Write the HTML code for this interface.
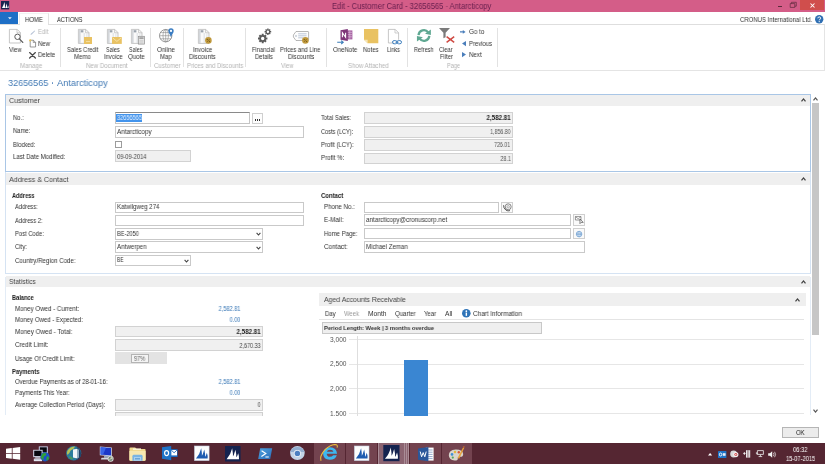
<!DOCTYPE html>
<html><head><meta charset="utf-8"><title>Edit - Customer Card - 32656565 - Antarcticopy</title>
<style>
html,body{margin:0;padding:0;}
body{width:825px;height:464px;overflow:hidden;background:#fff;position:relative;font-family:"Liberation Sans",sans-serif;}
.b{position:absolute;box-sizing:border-box;}
.t{will-change:transform;position:absolute;white-space:nowrap;line-height:1;display:block;}
svg{overflow:visible;}
#w{position:absolute;left:0;top:0;width:825px;height:464px;overflow:hidden;}
</style></head><body><div id="w">
<div class="b" style="left:0.00px;top:0.00px;width:825.00px;height:12.20px;background:#d45d88;"></div>
<div class="b" style="left:800.30px;top:0.00px;width:23.90px;height:9.80px;background:#d04e4c;"></div>
<span class="t" style="top:2px;font-size:8.4px;color:#6a2150;left:331.90px;transform-origin:0 50%;transform:scaleX(0.9025);">Edit - Customer Card - 32656565 · Antarcticopy</span>
<div class="b" style="left:0.00px;top:12.00px;width:18.00px;height:12.20px;background:#1e6fc6;"></div>
<div class="b" style="left:19.30px;top:13.00px;width:29.60px;height:12.00px;background:#fff;border:1px solid #e2e2e2;border-bottom:none;border-top-color:#f2f2f2;border-left-color:#ededed;"></div>
<div class="b" style="left:0.00px;top:24.20px;width:825.00px;height:46.80px;background:#fff;border:1px solid #e4e4e4;border-left:none;border-top-color:#dedede;"></div>
<div class="b" style="left:20.30px;top:23.80px;width:27.50px;height:1.70px;background:#fff;"></div>
<span class="t" style="top:17px;font-size:6.9px;color:#2a2a2a;left:25.20px;transform-origin:0 50%;transform:scaleX(0.8695);">HOME</span>
<span class="t" style="top:17px;font-size:6.9px;color:#2a2a2a;left:56.60px;transform-origin:0 50%;transform:scaleX(0.8282);">ACTIONS</span>
<span class="t" style="top:17px;font-size:6.9px;color:#333;left:739.70px;transform-origin:0 50%;transform:scaleX(0.8688);">CRONUS International Ltd.</span>
<span class="t" style="top:78px;font-size:9.4px;color:#4179b4;left:8.00px;transform-origin:0 50%;transform:scaleX(0.9659);">32656565</span>
<div class="b" style="left:51.70px;top:82.30px;width:1.40px;height:1.40px;background:#5a8abf;border-radius:0.7px;"></div>
<span class="t" style="top:78px;font-size:9.4px;color:#4179b4;left:56.70px;transform-origin:0 50%;transform:scaleX(0.9841);">Antarcticopy</span>
<div class="b" style="left:5.00px;top:94.00px;width:806.20px;height:78.00px;background:#fff;border:1px solid #a9c6e6;"></div>
<div class="b" style="left:6.00px;top:95.00px;width:804.20px;height:11.30px;background:#efefef;"></div>
<span class="t" style="top:97px;font-size:7.9px;color:#444;left:8.70px;transform-origin:0 50%;transform:scaleX(0.9082);">Customer</span>
<div class="b" style="left:5.00px;top:172.00px;width:806.20px;height:102.30px;border:1px solid #d5e3f3;border-top:none;"></div>
<div class="b" style="left:6.00px;top:172.60px;width:804.20px;height:12.00px;background:#efefef;"></div>
<span class="t" style="top:176px;font-size:7.9px;color:#444;left:8.70px;transform-origin:0 50%;transform:scaleX(0.9049);">Address &amp; Contact</span>
<div class="b" style="left:5.00px;top:276.60px;width:806.20px;height:138.90px;border:1px solid #e3ecf6;border-bottom:none;border-top:none;"></div>
<div class="b" style="left:6.00px;top:276.20px;width:804.20px;height:10.80px;background:#efefef;"></div>
<span class="t" style="top:278px;font-size:7.9px;color:#444;left:8.70px;transform-origin:0 50%;transform:scaleX(0.8510);">Statistics</span>
<svg class="b" style="left:801.20px;top:98.30px" width="5" height="4" viewBox="0 0 5 4"><path d="M0.5 3.3 L2.5 0.9 L4.5 3.3" fill="none" stroke="#444" stroke-width="1.3"/></svg>
<svg class="b" style="left:801.20px;top:176.60px" width="5" height="4" viewBox="0 0 5 4"><path d="M0.5 3.3 L2.5 0.9 L4.5 3.3" fill="none" stroke="#444" stroke-width="1.3"/></svg>
<svg class="b" style="left:801.20px;top:279.60px" width="5" height="4" viewBox="0 0 5 4"><path d="M0.5 3.3 L2.5 0.9 L4.5 3.3" fill="none" stroke="#444" stroke-width="1.3"/></svg>
<span class="t" style="top:115px;font-size:6.7px;color:#303030;left:12.60px;transform-origin:0 50%;transform:scaleX(0.8708);">No.:</span>
<span class="t" style="top:128px;font-size:6.7px;color:#303030;left:12.60px;transform-origin:0 50%;transform:scaleX(0.8817);">Name:</span>
<span class="t" style="top:142px;font-size:6.7px;color:#303030;left:12.60px;transform-origin:0 50%;transform:scaleX(0.8717);">Blocked:</span>
<span class="t" style="top:154px;font-size:6.7px;color:#303030;left:12.60px;transform-origin:0 50%;transform:scaleX(0.9077);">Last Date Modified:</span>
<div class="b" style="left:115.00px;top:112.20px;width:134.50px;height:11.80px;background:#fff;border:1px solid #c4c4c4;border-top-color:#8a8a8a;"></div>
<div class="b" style="left:116.00px;top:113.80px;width:26.20px;height:7.80px;background:#4394ec;"></div>
<span class="t" style="top:115px;font-size:6.4px;color:#e8f2ff;left:116.60px;transform-origin:0 50%;transform:scaleX(0.8779);">32656565</span>
<div class="b" style="left:251.50px;top:113.30px;width:11.30px;height:10.30px;background:#fdfdfd;border:1px solid #cfcfcf;"></div>
<div class="b" style="left:255.10px;top:119.20px;width:1.20px;height:1.40px;background:#333;"></div>
<div class="b" style="left:257.10px;top:119.20px;width:1.20px;height:1.40px;background:#333;"></div>
<div class="b" style="left:259.10px;top:119.20px;width:1.20px;height:1.40px;background:#333;"></div>
<div class="b" style="left:115.00px;top:126.20px;width:188.60px;height:11.40px;background:#fff;border:1px solid #c9c9c9;"></div>
<span class="t" style="top:129px;font-size:6.5px;color:#333;left:116.80px;transform-origin:0 50%;transform:scaleX(0.9674);">Antarcticopy</span>
<div class="b" style="left:115.30px;top:141.20px;width:6.60px;height:6.60px;background:#fff;border:1px solid #9c9c9c;"></div>
<div class="b" style="left:115.00px;top:150.20px;width:75.70px;height:12.20px;background:#f0f0f0;border:1px solid #d2d2d2;"></div>
<span class="t" style="top:154px;font-size:6.3px;color:#444;left:116.80px;transform-origin:0 50%;transform:scaleX(0.9123);">09-09-2014</span>
<span class="t" style="top:115px;font-size:6.7px;color:#303030;left:321.30px;transform-origin:0 50%;transform:scaleX(0.8690);">Total Sales:</span>
<span class="t" style="top:129px;font-size:6.7px;color:#303030;left:321.30px;transform-origin:0 50%;transform:scaleX(0.8397);">Costs (LCY):</span>
<span class="t" style="top:142px;font-size:6.7px;color:#303030;left:321.30px;transform-origin:0 50%;transform:scaleX(0.8818);">Profit (LCY):</span>
<span class="t" style="top:155px;font-size:6.7px;color:#303030;left:321.30px;transform-origin:0 50%;transform:scaleX(0.9163);">Profit %:</span>
<div class="b" style="left:364.30px;top:112.20px;width:148.50px;height:11.80px;background:#f0f0f0;border:1px solid #d2d2d2;"></div>
<div class="b" style="left:364.30px;top:126.20px;width:148.50px;height:11.40px;background:#f0f0f0;border:1px solid #d2d2d2;"></div>
<div class="b" style="left:364.30px;top:139.40px;width:148.50px;height:11.40px;background:#f0f0f0;border:1px solid #d2d2d2;"></div>
<div class="b" style="left:364.30px;top:152.60px;width:148.50px;height:11.70px;background:#f0f0f0;border:1px solid #d2d2d2;"></div>
<span class="t" style="top:115px;font-size:6.6px;color:#222;font-weight:bold;right:314.60px;transform-origin:100% 50%;transform:scaleX(0.9419);">2,582.81</span>
<span class="t" style="top:129px;font-size:6.6px;color:#555;right:314.40px;transform-origin:100% 50%;transform:scaleX(0.8018);">1,856.80</span>
<span class="t" style="top:142px;font-size:6.6px;color:#555;right:314.60px;transform-origin:100% 50%;transform:scaleX(0.7975);">726.01</span>
<span class="t" style="top:156px;font-size:6.6px;color:#555;right:314.60px;transform-origin:100% 50%;transform:scaleX(0.8096);">28.1</span>
<span class="t" style="top:193px;font-size:6.6px;color:#222;font-weight:bold;left:12.00px;transform-origin:0 50%;transform:scaleX(0.8519);">Address</span>
<span class="t" style="top:204px;font-size:6.7px;color:#303030;left:15.10px;transform-origin:0 50%;transform:scaleX(0.8585);">Address:</span>
<span class="t" style="top:218px;font-size:6.7px;color:#303030;left:15.10px;transform-origin:0 50%;transform:scaleX(0.8586);">Address 2:</span>
<span class="t" style="top:231px;font-size:6.7px;color:#303030;left:15.10px;transform-origin:0 50%;transform:scaleX(0.8719);">Post Code:</span>
<span class="t" style="top:244px;font-size:6.7px;color:#303030;left:15.10px;transform-origin:0 50%;transform:scaleX(0.8881);">City:</span>
<span class="t" style="top:258px;font-size:6.7px;color:#303030;left:15.10px;transform-origin:0 50%;transform:scaleX(0.9156);">Country/Region Code:</span>
<div class="b" style="left:115.00px;top:201.50px;width:188.60px;height:11.20px;background:#fff;border:1px solid #c9c9c9;"></div>
<span class="t" style="top:204px;font-size:6.4px;color:#333;left:116.80px;transform-origin:0 50%;transform:scaleX(0.9458);">Katwilgweg 274</span>
<div class="b" style="left:115.00px;top:214.80px;width:188.60px;height:11.40px;background:#fff;border:1px solid #c9c9c9;"></div>
<div class="b" style="left:115.00px;top:228.00px;width:147.70px;height:11.70px;background:#fff;border:1px solid #c9c9c9;"></div>
<span class="t" style="top:231px;font-size:6.3px;color:#333;left:116.80px;transform-origin:0 50%;transform:scaleX(0.8891);">BE-2050</span>
<svg class="b" style="left:256.20px;top:232.30px" width="5" height="4" viewBox="0 0 5 4"><path d="M0.6 0.8 L2.5 3 L4.4 0.8" fill="none" stroke="#444" stroke-width="1.1"/></svg>
<div class="b" style="left:115.00px;top:241.40px;width:147.70px;height:11.40px;background:#fff;border:1px solid #c9c9c9;"></div>
<span class="t" style="top:244px;font-size:6.3px;color:#333;left:116.80px;transform-origin:0 50%;transform:scaleX(0.9827);">Antwerpen</span>
<svg class="b" style="left:256.20px;top:245.60px" width="5" height="4" viewBox="0 0 5 4"><path d="M0.6 0.8 L2.5 3 L4.4 0.8" fill="none" stroke="#444" stroke-width="1.1"/></svg>
<div class="b" style="left:115.00px;top:254.50px;width:75.70px;height:11.90px;background:#fff;border:1px solid #c9c9c9;"></div>
<span class="t" style="top:257px;font-size:6.3px;color:#333;left:116.80px;transform-origin:0 50%;transform:scaleX(0.7853);">BE</span>
<svg class="b" style="left:184.00px;top:258.80px" width="5" height="4" viewBox="0 0 5 4"><path d="M0.6 0.8 L2.5 3 L4.4 0.8" fill="none" stroke="#444" stroke-width="1.1"/></svg>
<span class="t" style="top:193px;font-size:6.6px;color:#222;font-weight:bold;left:320.70px;transform-origin:0 50%;transform:scaleX(0.9077);">Contact</span>
<span class="t" style="top:204px;font-size:6.7px;color:#303030;left:323.60px;transform-origin:0 50%;transform:scaleX(0.9217);">Phone No.:</span>
<span class="t" style="top:217px;font-size:6.7px;color:#303030;left:323.60px;transform-origin:0 50%;transform:scaleX(0.9306);">E-Mail:</span>
<span class="t" style="top:231px;font-size:6.7px;color:#303030;left:323.60px;transform-origin:0 50%;transform:scaleX(0.8968);">Home Page:</span>
<span class="t" style="top:244px;font-size:6.7px;color:#303030;left:323.60px;transform-origin:0 50%;transform:scaleX(0.9458);">Contact:</span>
<div class="b" style="left:364.30px;top:201.50px;width:134.70px;height:11.00px;background:#fff;border:1px solid #c9c9c9;"></div>
<div class="b" style="left:501.00px;top:201.50px;width:11.80px;height:11.00px;background:#fafafa;border:1px solid #cfcfcf;"></div>
<div class="b" style="left:364.30px;top:214.40px;width:206.70px;height:11.40px;background:#fff;border:1px solid #c9c9c9;"></div>
<span class="t" style="top:217px;font-size:6.4px;color:#333;left:366.20px;transform-origin:0 50%;transform:scaleX(0.9743);">antarcticopy@cronuscorp.net</span>
<div class="b" style="left:573.40px;top:214.40px;width:11.50px;height:11.40px;background:#fafafa;border:1px solid #cfcfcf;"></div>
<div class="b" style="left:364.30px;top:227.80px;width:206.70px;height:11.40px;background:#fff;border:1px solid #c9c9c9;"></div>
<div class="b" style="left:573.40px;top:227.80px;width:11.50px;height:11.40px;background:#fafafa;border:1px solid #cfcfcf;"></div>
<div class="b" style="left:364.30px;top:241.30px;width:220.60px;height:11.40px;background:#fff;border:1px solid #c9c9c9;"></div>
<span class="t" style="top:244px;font-size:6.4px;color:#333;left:366.20px;transform-origin:0 50%;transform:scaleX(0.9554);">Michael Zeman</span>
<span class="t" style="top:295px;font-size:6.6px;color:#222;font-weight:bold;left:12.00px;transform-origin:0 50%;transform:scaleX(0.8612);">Balance</span>
<span class="t" style="top:306px;font-size:6.7px;color:#303030;left:14.90px;transform-origin:0 50%;transform:scaleX(0.9249);">Money Owed - Current:</span>
<span class="t" style="top:317px;font-size:6.7px;color:#303030;left:14.90px;transform-origin:0 50%;transform:scaleX(0.9039);">Money Owed - Expected:</span>
<span class="t" style="top:329px;font-size:6.7px;color:#303030;left:14.90px;transform-origin:0 50%;transform:scaleX(0.9377);">Money Owed - Total:</span>
<span class="t" style="top:342px;font-size:6.7px;color:#303030;left:14.90px;transform-origin:0 50%;transform:scaleX(0.9401);">Credit Limit:</span>
<span class="t" style="top:356px;font-size:6.7px;color:#303030;left:14.90px;transform-origin:0 50%;transform:scaleX(0.9058);">Usage Of Credit Limit:</span>
<span class="t" style="top:369px;font-size:6.6px;color:#222;font-weight:bold;left:12.00px;transform-origin:0 50%;transform:scaleX(0.8819);">Payments</span>
<span class="t" style="top:379px;font-size:6.7px;color:#303030;left:14.90px;transform-origin:0 50%;transform:scaleX(0.8889);">Overdue Payments as of 28-01-16:</span>
<span class="t" style="top:390px;font-size:6.7px;color:#303030;left:14.90px;transform-origin:0 50%;transform:scaleX(0.8903);">Payments This Year:</span>
<span class="t" style="top:402px;font-size:6.7px;color:#303030;left:14.90px;transform-origin:0 50%;transform:scaleX(0.8988);">Average Collection Period (Days):</span>
<span class="t" style="top:306px;font-size:6.3px;color:#3b79b7;right:584.60px;transform-origin:100% 50%;transform:scaleX(0.8930);">2,582.81</span>
<span class="t" style="top:317px;font-size:6.3px;color:#3b79b7;right:584.60px;transform-origin:100% 50%;transform:scaleX(0.8645);">0.00</span>
<span class="t" style="top:379px;font-size:6.3px;color:#3b79b7;right:584.60px;transform-origin:100% 50%;transform:scaleX(0.8930);">2,582.81</span>
<span class="t" style="top:390px;font-size:6.3px;color:#3b79b7;right:584.60px;transform-origin:100% 50%;transform:scaleX(0.8645);">0.00</span>
<div class="b" style="left:115.00px;top:326.00px;width:147.70px;height:11.40px;background:#f0f0f0;border:1px solid #d2d2d2;"></div>
<span class="t" style="top:329px;font-size:6.6px;color:#222;font-weight:bold;right:564.20px;transform-origin:100% 50%;transform:scaleX(0.9419);">2,582.81</span>
<div class="b" style="left:115.00px;top:339.40px;width:147.70px;height:11.40px;background:#f0f0f0;border:1px solid #d2d2d2;"></div>
<span class="t" style="top:343px;font-size:6.6px;color:#444;right:564.20px;transform-origin:100% 50%;transform:scaleX(0.8252);">2,670.33</span>
<div class="b" style="left:115.00px;top:352.20px;width:51.60px;height:12.10px;background:#e3e3e3;"></div>
<div class="b" style="left:130.60px;top:353.80px;width:18.80px;height:8.80px;background:#f4f4f4;border:1px solid #b4b4b4;"></div>
<span class="t" style="top:356px;font-size:6.4px;color:#666;left:134.20px;transform-origin:0 50%;transform:scaleX(0.8744);">97%</span>
<div class="b" style="left:115.00px;top:399.00px;width:147.70px;height:11.50px;background:#f0f0f0;border:1px solid #d2d2d2;"></div>
<span class="t" style="top:402px;font-size:6.3px;color:#444;right:564.20px;transform-origin:100% 50%;transform:scaleX(0.7991);">0</span>
<div class="b" style="left:115.00px;top:412.40px;width:147.70px;height:3.60px;background:#f0f0f0;border:1px solid #cfcfcf;border-bottom:none;"></div>
<div class="b" style="left:318.80px;top:293.00px;width:487.40px;height:12.80px;background:#efefef;"></div>
<span class="t" style="top:296px;font-size:7.3px;color:#444;left:323.60px;transform-origin:0 50%;transform:scaleX(0.9430);">Aged Accounts Receivable</span>
<svg class="b" style="left:795.40px;top:297.60px" width="5" height="4" viewBox="0 0 5 4"><path d="M0.5 3.3 L2.5 0.9 L4.5 3.3" fill="none" stroke="#444" stroke-width="1.3"/></svg>
<span class="t" style="top:311px;font-size:6.6px;color:#333;left:324.70px;transform-origin:0 50%;transform:scaleX(0.9031);">Day</span>
<span class="t" style="top:311px;font-size:6.6px;color:#999;left:344.00px;transform-origin:0 50%;transform:scaleX(0.8954);">Week</span>
<span class="t" style="top:311px;font-size:6.6px;color:#333;left:367.60px;transform-origin:0 50%;transform:scaleX(1.0140);">Month</span>
<span class="t" style="top:311px;font-size:6.6px;color:#333;left:395.00px;transform-origin:0 50%;transform:scaleX(0.9206);">Quarter</span>
<span class="t" style="top:311px;font-size:6.6px;color:#333;left:424.40px;transform-origin:0 50%;transform:scaleX(0.8998);">Year</span>
<span class="t" style="top:311px;font-size:6.6px;color:#333;left:444.70px;transform-origin:0 50%;transform:scaleX(0.9952);">All</span>
<svg class="b" style="left:461.80px;top:309.10px" width="8.6" height="8.6" viewBox="0 0 16 16"><circle cx="8" cy="8" r="8" fill="#2f74b8"/><rect x="6.8" y="6.6" width="2.6" height="6.2" fill="#fff"/><circle cx="8.1" cy="4" r="1.6" fill="#fff"/></svg>
<span class="t" style="top:311px;font-size:6.6px;color:#333;left:472.70px;transform-origin:0 50%;transform:scaleX(0.9629);">Chart Information</span>
<div class="b" style="left:318.80px;top:318.60px;width:484.80px;height:0.80px;background:#e4e4e4;"></div>
<div class="b" style="left:321.80px;top:322.30px;width:220.10px;height:11.50px;background:#efefef;border:1px solid #c8c8c8;"></div>
<span class="t" style="top:325px;font-size:6.2px;color:#333;font-weight:bold;left:323.60px;transform-origin:0 50%;transform:scaleX(0.9173);">Period Length: Week | 3 months overdue</span>
<div class="b" style="left:348.50px;top:338.80px;width:455.10px;height:0.80px;background:#e6e6e6;"></div>
<span class="t" style="top:337px;font-size:6.6px;color:#555;left:329.80px;transform-origin:0 50%;transform:scaleX(0.9929);">3,000</span>
<div class="b" style="left:348.50px;top:363.60px;width:455.10px;height:0.80px;background:#e6e6e6;"></div>
<span class="t" style="top:361px;font-size:6.6px;color:#555;left:329.80px;transform-origin:0 50%;transform:scaleX(0.9929);">2,500</span>
<div class="b" style="left:348.50px;top:388.20px;width:455.10px;height:0.80px;background:#e6e6e6;"></div>
<span class="t" style="top:386px;font-size:6.6px;color:#555;left:329.80px;transform-origin:0 50%;transform:scaleX(0.9929);">2,000</span>
<div class="b" style="left:348.50px;top:412.80px;width:455.10px;height:0.80px;background:#e6e6e6;"></div>
<span class="t" style="top:411px;font-size:6.6px;color:#555;left:329.80px;transform-origin:0 50%;transform:scaleX(0.9929);">1,500</span>
<div class="b" style="left:356.70px;top:336.00px;width:0.80px;height:79.60px;background:#dedede;"></div>
<div class="b" style="left:404.40px;top:359.80px;width:23.70px;height:55.80px;background:#3a86d2;"></div>
<div class="b" style="left:0.00px;top:415.60px;width:825.00px;height:27.60px;background:#fff;"></div>
<div class="b" style="left:782.30px;top:426.60px;width:37.10px;height:11.20px;background:#ececec;border:1px solid #b5b5b5;"></div>
<span class="t" style="top:430px;font-size:6.8px;color:#222;left:796.20px;transform-origin:0 50%;transform:scaleX(0.8753);">OK</span>
<div class="b" style="left:812.20px;top:102.80px;width:7.00px;height:232.40px;background:#c6c6c6;"></div>
<svg class="b" style="left:813.20px;top:96.80px" width="5" height="4" viewBox="0 0 5 4"><path d="M0.5 3.3 L2.5 0.9 L4.5 3.3" fill="none" stroke="#555" stroke-width="1.2"/></svg>
<svg class="b" style="left:813.20px;top:408.80px" width="5" height="4" viewBox="0 0 5 4"><path d="M0.5 0.7 L2.5 3.1 L4.5 0.7" fill="none" stroke="#555" stroke-width="1.2"/></svg>
<div class="b" style="left:0.00px;top:443.20px;width:825.00px;height:20.80px;background:#552632;"></div>
<div class="b" style="left:60.20px;top:28.00px;width:0.80px;height:38.80px;background:#e2e2e2;"></div>
<div class="b" style="left:150.00px;top:28.00px;width:0.80px;height:38.80px;background:#e2e2e2;"></div>
<div class="b" style="left:183.10px;top:28.00px;width:0.80px;height:38.80px;background:#e2e2e2;"></div>
<div class="b" style="left:245.10px;top:28.00px;width:0.80px;height:38.80px;background:#e2e2e2;"></div>
<div class="b" style="left:326.10px;top:28.00px;width:0.80px;height:38.80px;background:#e2e2e2;"></div>
<div class="b" style="left:407.00px;top:28.00px;width:0.80px;height:38.80px;background:#e2e2e2;"></div>
<div class="b" style="left:496.80px;top:28.00px;width:0.80px;height:38.80px;background:#e2e2e2;"></div>
<svg class="b" style="left:7.60px;top:17.40px" width="3.8" height="2.5" viewBox="0 0 44 26"><path d="M0 0 H44 L22 26 Z" fill="#eaf3fd"/></svg>
<svg class="b" style="left:815.20px;top:15.00px" width="8.4" height="8.4" viewBox="0 0 16 16"><circle cx="8" cy="8" r="8" fill="#2f6fb3"/><path d="M5.4 6.2 C5.4 2.9 10.8 2.9 10.8 6 C10.8 8 8.1 8 8.1 10.2" fill="none" stroke="#fff" stroke-width="1.9"/><circle cx="8.1" cy="12.6" r="1.2" fill="#fff"/></svg>
<div class="b" style="left:778.20px;top:5.90px;width:4.00px;height:1.20px;background:#5b2a3c;"></div>
<svg class="b" style="left:789.80px;top:2.20px" width="6.6" height="5.6" viewBox="0 0 66 56"><path d="M2 16 H48 V54 H2 Z M14 16 V3 H63 V42 H48" fill="none" stroke="#5b2a3c" stroke-width="7"/></svg>
<svg class="b" style="left:809.60px;top:2.60px" width="5" height="5" viewBox="0 0 10 10"><path d="M1 1 L9 9 M9 1 L1 9" stroke="#fff" stroke-width="2.1"/></svg>
<svg class="b" style="left:0.90px;top:1.40px" width="8.2" height="8.4" viewBox="0 0 82 84"><rect width="82" height="84" fill="#1b2550"/><path d="M10 70 Q26 44 34 10 Q42 40 40 70 Z M42 70 Q52 48 56 24 Q64 48 62 70 Z M64 70 Q70 56 72 42 Q77 56 76 70 Z" fill="#fff"/></svg>
<svg class="b" style="left:9.40px;top:28.80px" width="14.4" height="14.4" viewBox="0 0 144 144"><path d="M4 4 H82 L114 36 V140 H4 Z" fill="#fff" stroke="#b9b9b9" stroke-width="8"/><path d="M80 4 V38 H114" fill="none" stroke="#b9b9b9" stroke-width="7"/><circle cx="85" cy="78" r="27" fill="#fff" stroke="#5a5a5a" stroke-width="10"/><path d="M104 99 L138 134" stroke="#5a5a5a" stroke-width="13" stroke-linecap="round"/></svg>
<span class="t" style="top:47px;font-size:6.7px;color:#333;left:9.20px;transform-origin:0 50%;transform:scaleX(0.8749);">View</span>
<svg class="b" style="left:29.60px;top:29.60px" width="5.6" height="5.4" viewBox="0 0 56 54"><path d="M4 50 L10 36 L46 4 L52 10 L18 44 Z" fill="#b7c3d6"/></svg>
<span class="t" style="top:29px;font-size:6.7px;color:#b5b5b5;left:37.80px;transform-origin:0 50%;transform:scaleX(0.8835);">Edit</span>
<svg class="b" style="left:29.00px;top:38.60px" width="7.2" height="8.4" viewBox="0 0 72 84"><path d="M12 12 H44 L66 34 V80 H12 Z" fill="#fff" stroke="#6a6a6a" stroke-width="7"/><path d="M43 12 V35 H66" fill="none" stroke="#6a6a6a" stroke-width="6"/><circle cx="12" cy="14" r="11" fill="#e8c455"/></svg>
<span class="t" style="top:41px;font-size:6.7px;color:#333;left:38.00px;transform-origin:0 50%;transform:scaleX(0.8953);">New</span>
<svg class="b" style="left:28.90px;top:51.60px" width="7" height="6.6" viewBox="0 0 70 66"><path d="M6 6 L64 60 M64 6 L6 60" stroke="#4a4a4a" stroke-width="13" stroke-linecap="round"/></svg>
<span class="t" style="top:52px;font-size:6.7px;color:#333;left:38.00px;transform-origin:0 50%;transform:scaleX(0.8932);">Delete</span>
<span class="t" style="top:63px;font-size:6.7px;color:#b4b4b4;left:19.90px;transform-origin:0 50%;transform:scaleX(0.9210);">Manage</span>
<svg class="b" style="left:77.60px;top:28.80px" width="11.4" height="14.8" viewBox="0 0 114 148"><path d="M4 4 H78 L110 36 V144 H4 Z" fill="#fafafa" stroke="#b9b9b9" stroke-width="8"/><path d="M76 4 V38 H110" fill="none" stroke="#b9b9b9" stroke-width="7"/><rect x="8" y="8" width="18" height="132" fill="#d3d6da"/><rect x="28" y="12" width="26" height="22" fill="#9aa3ad"/><rect x="56" y="40" width="12" height="100" fill="#dfe2e6"/><rect x="84" y="44" width="10" height="96" fill="#dfe2e6"/></svg>
<div class="b" style="left:84.40px;top:37.10px;width:7.50px;height:6.90px;background:#e9c262;"></div>
<div class="b" style="left:85.60px;top:40.60px;width:4.40px;height:1.00px;background:#f3dc9c;"></div>
<span class="t" style="top:47px;font-size:6.7px;color:#333;left:67.00px;transform-origin:0 50%;transform:scaleX(0.8631);">Sales Credit</span>
<span class="t" style="top:54px;font-size:6.7px;color:#333;left:74.40px;transform-origin:0 50%;transform:scaleX(0.9078);">Memo</span>
<svg class="b" style="left:107.20px;top:28.80px" width="11.4" height="14.8" viewBox="0 0 114 148"><path d="M4 4 H78 L110 36 V144 H4 Z" fill="#fafafa" stroke="#b9b9b9" stroke-width="8"/><path d="M76 4 V38 H110" fill="none" stroke="#b9b9b9" stroke-width="7"/><rect x="8" y="8" width="18" height="132" fill="#d3d6da"/><rect x="28" y="12" width="26" height="22" fill="#9aa3ad"/><rect x="56" y="40" width="12" height="100" fill="#dfe2e6"/><rect x="84" y="44" width="10" height="96" fill="#dfe2e6"/></svg>
<svg class="b" style="left:112.20px;top:37.10px" width="9.8" height="6.9" viewBox="0 0 98 69"><rect width="98" height="69" fill="#e9c262"/><path d="M6 8 L49 44 L92 8" fill="none" stroke="#f6e3ad" stroke-width="9"/></svg>
<span class="t" style="top:47px;font-size:6.7px;color:#333;left:105.90px;transform-origin:0 50%;transform:scaleX(0.8114);">Sales</span>
<span class="t" style="top:54px;font-size:6.7px;color:#333;left:103.80px;transform-origin:0 50%;transform:scaleX(0.8762);">Invoice</span>
<svg class="b" style="left:131.00px;top:28.80px" width="11.4" height="14.8" viewBox="0 0 114 148"><path d="M4 4 H78 L110 36 V144 H4 Z" fill="#fafafa" stroke="#b9b9b9" stroke-width="8"/><path d="M76 4 V38 H110" fill="none" stroke="#b9b9b9" stroke-width="7"/><rect x="8" y="8" width="18" height="132" fill="#d3d6da"/><rect x="28" y="12" width="26" height="22" fill="#9aa3ad"/><rect x="56" y="40" width="12" height="100" fill="#dfe2e6"/><rect x="84" y="44" width="10" height="96" fill="#dfe2e6"/></svg>
<svg class="b" style="left:138.40px;top:36.10px" width="6.9" height="8.4" viewBox="0 0 69 84"><rect x="3" y="3" width="63" height="78" fill="#e9e9e9" stroke="#8d8d8d" stroke-width="7"/><rect x="13" y="13" width="43" height="16" fill="#9b9b9b"/><path d="M14 44 H54 M14 58 H54 M14 71 H54" stroke="#bdbdbd" stroke-width="6"/></svg>
<span class="t" style="top:47px;font-size:6.7px;color:#333;left:129.00px;transform-origin:0 50%;transform:scaleX(0.7935);">Sales</span>
<span class="t" style="top:54px;font-size:6.7px;color:#333;left:128.00px;transform-origin:0 50%;transform:scaleX(0.9150);">Quote</span>
<span class="t" style="top:63px;font-size:6.7px;color:#b4b4b4;left:86.00px;transform-origin:0 50%;transform:scaleX(0.9104);">New Document</span>
<svg class="b" style="left:159.40px;top:29.00px" width="13.4" height="13.4" viewBox="0 0 134 134"><circle cx="67" cy="67" r="62" fill="#fff" stroke="#7c7c7c" stroke-width="8"/><ellipse cx="67" cy="67" rx="27" ry="62" fill="none" stroke="#8a8a8a" stroke-width="6"/><path d="M5 67 H129 M14 36 H120 M14 98 H120 M67 5 V129" stroke="#8a8a8a" stroke-width="6" fill="none"/></svg>
<svg class="b" style="left:168.40px;top:27.60px" width="6" height="9.4" viewBox="0 0 60 94"><path d="M30 92 C22 64 3 52 3 30 A27 27 0 0 1 57 30 C57 52 38 64 30 92 Z" fill="#3b7dc2"/><circle cx="30" cy="29" r="11" fill="#fff"/></svg>
<span class="t" style="top:47px;font-size:6.7px;color:#333;left:156.80px;transform-origin:0 50%;transform:scaleX(0.9294);">Online</span>
<span class="t" style="top:54px;font-size:6.7px;color:#333;left:160.00px;transform-origin:0 50%;transform:scaleX(0.8976);">Map</span>
<span class="t" style="top:63px;font-size:6.7px;color:#b4b4b4;left:154.30px;transform-origin:0 50%;transform:scaleX(0.9194);">Customer</span>
<svg class="b" style="left:198.00px;top:28.80px" width="11.4" height="14.8" viewBox="0 0 114 148"><path d="M4 4 H78 L110 36 V144 H4 Z" fill="#fafafa" stroke="#b9b9b9" stroke-width="8"/><path d="M76 4 V38 H110" fill="none" stroke="#b9b9b9" stroke-width="7"/><rect x="8" y="8" width="18" height="132" fill="#d3d6da"/><rect x="28" y="12" width="26" height="22" fill="#9aa3ad"/><rect x="56" y="40" width="12" height="100" fill="#dfe2e6"/><rect x="84" y="44" width="10" height="96" fill="#dfe2e6"/></svg>
<svg class="b" style="left:204.60px;top:36.70px" width="6.8" height="6.8" viewBox="0 0 68 68"><circle cx="34" cy="34" r="33" fill="#c19a3d"/><circle cx="23" cy="24" r="7" fill="#7d5f1c"/><circle cx="45" cy="45" r="7" fill="#7d5f1c"/><path d="M48 18 L20 50" stroke="#7d5f1c" stroke-width="7"/></svg>
<span class="t" style="top:47px;font-size:6.7px;color:#333;left:192.70px;transform-origin:0 50%;transform:scaleX(0.9091);">Invoice</span>
<span class="t" style="top:54px;font-size:6.7px;color:#333;left:189.40px;transform-origin:0 50%;transform:scaleX(0.9042);">Discounts</span>
<span class="t" style="top:63px;font-size:6.7px;color:#b4b4b4;left:187.20px;transform-origin:0 50%;transform:scaleX(0.8946);">Prices and Discounts</span>
<svg class="b" style="left:0;top:0" width="825" height="80" viewBox="0 0 825 80"><path d="M265.28 38.50 L267.40 38.50 M264.53 40.33 L266.02 41.82 M262.70 41.09 L262.70 43.20 M260.87 40.33 L259.38 41.82 M260.12 38.50 L258.00 38.50 M260.87 36.67 L259.38 35.18 M262.70 35.91 L262.70 33.80 M264.53 36.67 L266.02 35.18 " stroke="#5a5a5a" stroke-width="1.97"/><circle cx="262.7" cy="38.5" r="2.54" fill="none" stroke="#5a5a5a" stroke-width="1.68"/></svg>
<svg class="b" style="left:0;top:0" width="825" height="80" viewBox="0 0 825 80"><path d="M269.71 31.80 L271.20 31.80 M269.18 33.08 L270.23 34.13 M267.90 33.62 L267.90 35.10 M266.62 33.08 L265.57 34.13 M266.08 31.80 L264.60 31.80 M266.62 30.52 L265.57 29.47 M267.90 29.98 L267.90 28.50 M269.18 30.52 L270.23 29.47 " stroke="#5a5a5a" stroke-width="1.39"/><circle cx="267.9" cy="31.8" r="1.79" fill="none" stroke="#5a5a5a" stroke-width="1.18"/></svg>
<span class="t" style="top:47px;font-size:6.7px;color:#333;left:252.00px;transform-origin:0 50%;transform:scaleX(0.8578);">Financial</span>
<span class="t" style="top:54px;font-size:6.7px;color:#333;left:255.20px;transform-origin:0 50%;transform:scaleX(0.8740);">Details</span>
<svg class="b" style="left:293.20px;top:31.20px" width="16" height="10" viewBox="0 0 160 100"><path d="M30 5 H150 Q156 5 156 11 V89 Q156 95 150 95 H30 L4 60 V40 Z" fill="#fdfdfd" stroke="#9a9a9a" stroke-width="7"/><circle cx="30" cy="50" r="7" fill="#8c9bb0"/><path d="M52 28 H136 M52 48 H136 M52 68 H100" stroke="#9fb0c8" stroke-width="7"/></svg>
<svg class="b" style="left:302.30px;top:36.70px" width="6.8" height="6.8" viewBox="0 0 68 68"><circle cx="34" cy="34" r="33" fill="#c19a3d"/><circle cx="23" cy="24" r="7" fill="#7d5f1c"/><circle cx="45" cy="45" r="7" fill="#7d5f1c"/><path d="M48 18 L20 50" stroke="#7d5f1c" stroke-width="7"/></svg>
<span class="t" style="top:47px;font-size:6.7px;color:#333;left:280.40px;transform-origin:0 50%;transform:scaleX(0.8726);">Prices and Line</span>
<span class="t" style="top:54px;font-size:6.7px;color:#333;left:287.70px;transform-origin:0 50%;transform:scaleX(0.8940);">Discounts</span>
<span class="t" style="top:63px;font-size:6.7px;color:#b4b4b4;left:281.00px;transform-origin:0 50%;transform:scaleX(0.8679);">View</span>
<svg class="b" style="left:337.00px;top:28.80px" width="16" height="15" viewBox="0 0 160 150"><rect x="92" y="14" width="62" height="90" fill="#a763a3"/><path d="M128 20 V98 M104 34 H150 M104 56 H150 M104 78 H150" stroke="#dcbfda" stroke-width="6"/><path d="M35 12 L108 0 V120 L35 108 Z" fill="#7d3578"/><path d="M54 82 V38 L86 82 V38" fill="none" stroke="#fff" stroke-width="11"/><path d="M2 133 H60 M42 116 L62 133 L42 150" fill="none" stroke="#3b7cb8" stroke-width="11"/></svg>
<svg class="b" style="left:363.70px;top:28.80px" width="14.3" height="14.3" viewBox="0 0 143 143"><path d="M0 0 H143 V143 H36 L0 107 Z" fill="#e9c262"/><path d="M0 107 H36 V143 Z" fill="#f6e6b7"/></svg>
<svg class="b" style="left:387.80px;top:28.80px" width="11" height="14.4" viewBox="0 0 110 144"><path d="M4 4 H72 L106 38 V108 M60 140 H4 V4" fill="none" stroke="#b9b9b9" stroke-width="8"/><path d="M70 4 V40 H106" fill="none" stroke="#b9b9b9" stroke-width="7"/></svg>
<svg class="b" style="left:391.80px;top:39.80px" width="10" height="4.4" viewBox="0 0 100 44"><rect x="5" y="6" width="46" height="32" rx="16" fill="none" stroke="#3c7dbd" stroke-width="10"/><rect x="49" y="6" width="46" height="32" rx="16" fill="none" stroke="#3c7dbd" stroke-width="10"/><path d="M34 22 H66" stroke="#3c7dbd" stroke-width="9"/></svg>
<span class="t" style="top:47px;font-size:6.7px;color:#333;left:333.20px;transform-origin:0 50%;transform:scaleX(0.9062);">OneNote</span>
<span class="t" style="top:47px;font-size:6.7px;color:#333;left:363.00px;transform-origin:0 50%;transform:scaleX(0.8856);">Notes</span>
<span class="t" style="top:47px;font-size:6.7px;color:#333;left:387.00px;transform-origin:0 50%;transform:scaleX(0.8247);">Links</span>
<span class="t" style="top:63px;font-size:6.7px;color:#b4b4b4;left:347.80px;transform-origin:0 50%;transform:scaleX(0.9105);">Show Attached</span>
<svg class="b" style="left:417.00px;top:28.80px" width="14" height="13.4" viewBox="0 0 140 134"><g fill="#5fa892" stroke="none"><path d="M15.5 61 A53.5 53.5 0 0 1 112 34" fill="none" stroke="#5fa892" stroke-width="23"/><path d="M139 6 V60 L80 48 Z"/><g transform="rotate(180 69.3 65)"><path d="M15.5 61 A53.5 53.5 0 0 1 112 34" fill="none" stroke="#5fa892" stroke-width="23"/><path d="M139 6 V60 L80 48 Z"/></g></g></svg>
<span class="t" style="top:47px;font-size:6.7px;color:#333;left:414.00px;transform-origin:0 50%;transform:scaleX(0.8354);">Refresh</span>
<svg class="b" style="left:439.00px;top:28.40px" width="11" height="10.2" viewBox="0 0 110 102"><path d="M0 0 H110 L66 48 V92 L44 102 V48 Z" fill="#7b7b7b"/></svg>
<svg class="b" style="left:445.80px;top:36.00px" width="8.8" height="7" viewBox="0 0 88 70"><path d="M6 6 L82 64 M82 6 L6 64" stroke="#cf4a43" stroke-width="15"/></svg>
<span class="t" style="top:47px;font-size:6.7px;color:#333;left:439.20px;transform-origin:0 50%;transform:scaleX(0.8494);">Clear</span>
<span class="t" style="top:54px;font-size:6.7px;color:#333;left:439.90px;transform-origin:0 50%;transform:scaleX(0.8664);">Filter</span>
<svg class="b" style="left:460.40px;top:30.20px" width="5.6" height="3.8" viewBox="0 0 56 38"><path d="M0 13 H28 V0 L56 19 L28 38 V25 H0 Z" fill="#4a7ebb"/></svg>
<span class="t" style="top:29px;font-size:6.7px;color:#333;left:468.90px;transform-origin:0 50%;transform:scaleX(0.9337);">Go to</span>
<svg class="b" style="left:461.80px;top:40.70px" width="4" height="5.2" viewBox="0 0 40 52"><path d="M40 0 V52 L0 26 Z" fill="#4a7ebb"/></svg>
<span class="t" style="top:41px;font-size:6.7px;color:#333;left:468.90px;transform-origin:0 50%;transform:scaleX(0.8823);">Previous</span>
<svg class="b" style="left:461.60px;top:52.20px" width="4" height="5.2" viewBox="0 0 40 52"><path d="M0 0 V52 L40 26 Z" fill="#4a7ebb"/></svg>
<span class="t" style="top:52px;font-size:6.7px;color:#333;left:468.90px;transform-origin:0 50%;transform:scaleX(0.9219);">Next</span>
<span class="t" style="top:63px;font-size:6.7px;color:#b4b4b4;left:446.70px;transform-origin:0 50%;transform:scaleX(0.8308);">Page</span>
<div class="b" style="left:314.20px;top:443.20px;width:30.80px;height:20.80px;background:#73434f;"></div>
<div class="b" style="left:346.00px;top:443.20px;width:31.00px;height:20.80px;background:#73434f;"></div>
<div class="b" style="left:377.70px;top:443.20px;width:31.10px;height:20.80px;background:#8b6471;border:1px solid #a98c96;border-top:none;border-bottom:none;"></div>
<div class="b" style="left:403.60px;top:443.20px;width:0.80px;height:20.80px;background:#a98c96;"></div>
<div class="b" style="left:405.80px;top:443.20px;width:0.80px;height:20.80px;background:#a98c96;"></div>
<div class="b" style="left:409.60px;top:443.20px;width:31.40px;height:20.80px;background:#73434f;"></div>
<div class="b" style="left:441.80px;top:443.20px;width:30.60px;height:20.80px;background:#73434f;"></div>
<svg class="b" style="left:5.80px;top:447.00px" width="14.2" height="12.7" viewBox="0 0 142 127"><path d="M0 18 L58 10 V60 H0 Z M66 9 L142 0 V60 H66 Z M0 67 H58 V117 L0 109 Z M66 67 H142 V127 L66 118 Z" fill="#fff"/></svg>
<svg class="b" style="left:33.40px;top:445.60px" width="17" height="16.4" viewBox="0 0 170 164"><rect x="58" y="4" width="90" height="74" fill="#c9cde6"/><rect x="68" y="13" width="70" height="52" fill="#07070f"/><rect x="2" y="38" width="94" height="74" fill="#d6d9ea"/><rect x="12" y="47" width="74" height="54" fill="#07070f"/><rect x="22" y="112" width="54" height="14" fill="#b9bccb"/><rect x="8" y="126" width="82" height="26" fill="#e4e6f0"/><rect x="14" y="134" width="70" height="6" fill="#b6b9c8"/><circle cx="120" cy="108" r="46" fill="#1b50cc"/><path d="M92 78 Q114 64 136 76 Q132 100 110 106 Q98 126 112 148 Q84 138 78 110 Z" fill="#2fa03a"/><path d="M140 100 Q160 104 162 122 Q154 142 134 148 Q130 124 140 100 Z" fill="#2fa03a"/></svg>
<svg class="b" style="left:66.20px;top:446.00px" width="15.4" height="14.6" viewBox="0 0 154 146"><ellipse cx="77" cy="73" rx="76" ry="72" fill="#2b7d9c"/><path d="M14 48 Q40 4 92 4 Q74 36 46 46 Q38 74 14 90 Q4 66 14 48 Z" fill="#b7c257"/><path d="M26 104 Q58 96 70 134 Q44 138 26 104 Z" fill="#4a9a5a"/><path d="M108 8 Q160 46 148 100 Q136 132 104 142 Z" fill="#1f3f66"/><path d="M70 36 L114 28 V124 L70 114 Z" fill="#f2f6f8"/><path d="M114 28 L128 38 V114 L114 124 Z" fill="#a9c8d6"/></svg>
<svg class="b" style="left:98.60px;top:445.60px" width="16" height="16.4" viewBox="0 0 160 164"><path d="M8 4 L128 14 V104 L8 92 Z" fill="#c9d6ee"/><path d="M16 12 L120 21 V96 L16 85 Z" fill="#1c37c8"/><path d="M16 12 L70 17 L40 88 L16 85 Z" fill="#3a63e6"/><path d="M50 100 H96 V118 H50 Z" fill="#9aa6be"/><path d="M26 118 H118 L126 136 H18 Z" fill="#d4d9e4"/><circle cx="116" cy="128" r="30" fill="#e3e6e3"/><circle cx="116" cy="128" r="22" fill="#7a8a7a"/><path d="M104 136 L128 120 M118 118 H130 V130" stroke="#e9f5d8" stroke-width="7" fill="none"/></svg>
<svg class="b" style="left:129.40px;top:447.20px" width="17" height="14" viewBox="0 0 170 140"><path d="M4 18 Q4 6 16 6 H62 L76 20 H156 Q166 20 166 30 V128 Q166 138 156 138 H14 Q4 138 4 128 Z" fill="#f1d98f"/><path d="M4 40 H166 V128 Q166 138 156 138 H14 Q4 138 4 128 Z" fill="#f7e7b0"/><path d="M40 14 H120 V30 H40 Z" fill="#fbf3d6"/><path d="M34 92 Q34 78 50 78 H120 Q136 78 136 92 V138 H34 Z" fill="#79b4e3"/><path d="M50 100 H120 V138 H50 Z" fill="#a9d0f0"/><rect x="60" y="112" width="50" height="12" fill="#5d9bd0"/></svg>
<svg class="b" style="left:161.80px;top:446.40px" width="16" height="14.2" viewBox="0 0 160 142"><rect x="84" y="32" width="72" height="78" fill="#1b6ac0"/><rect x="92" y="40" width="58" height="54" fill="#fff"/><path d="M92 40 L121 68 L150 40" fill="none" stroke="#1b6ac0" stroke-width="9"/><path d="M0 12 L92 0 V142 L0 128 Z" fill="#1e73c8"/><ellipse cx="46" cy="71" rx="20" ry="25" fill="none" stroke="#fff" stroke-width="12"/></svg>
<svg class="b" style="left:193.90px;top:446.00px" width="15.6" height="14.6" viewBox="0 0 100 100"><rect width="100" height="100" fill="#fdfdfd" stroke="#c9d3e3" stroke-width="4"/><path d="M10 85 Q36 58 46 15 Q53 50 51 85 Z M40 85 Q60 58 67 24 Q75 54 73 85 Z M64 85 Q80 68 85 46 Q92 66 90 85 Z" fill="#1d5bb0"/></svg>
<svg class="b" style="left:225.40px;top:445.70px" width="15.6" height="15.5" viewBox="0 0 100 100"><rect width="100" height="100" fill="#15234f"/><path d="M10 85 Q36 58 46 15 Q53 50 51 85 Z M40 85 Q60 58 67 24 Q75 54 73 85 Z M64 85 Q80 68 85 46 Q92 66 90 85 Z" fill="#fff"/></svg>
<svg class="b" style="left:258.20px;top:447.80px" width="14.4" height="11.2" viewBox="0 0 144 112"><defs><linearGradient id="pg" x1="0" y1="0" x2="1" y2="1"><stop offset="0" stop-color="#4fa3e0"/><stop offset="1" stop-color="#2a6cb8"/></linearGradient></defs><path d="M22 2 H142 L122 110 H2 Z" fill="url(#pg)"/><path d="M36 28 L78 56 L34 86" fill="none" stroke="#fff" stroke-width="12"/><path d="M74 90 H108" stroke="#fff" stroke-width="10"/></svg>
<svg class="b" style="left:290.00px;top:446.40px" width="14.8" height="14.2" viewBox="0 0 148 142"><ellipse cx="74" cy="71" rx="73" ry="70" fill="#c3d3e6"/><path d="M4 60 A73 70 0 0 1 144 60 L104 60 A32 30 0 0 0 44 60 Z" fill="#93aed0"/><ellipse cx="74" cy="74" rx="36" ry="34" fill="#e9eff6"/><ellipse cx="74" cy="74" rx="27" ry="26" fill="#4c7fc0"/></svg>
<svg class="b" style="left:319.60px;top:444.30px" width="19" height="17.4" viewBox="0 0 166 154"><path d="M150 86 H58 Q60 112 86 114 Q106 114 116 100 H148 Q134 140 86 140 Q28 138 26 84 Q30 30 86 28 Q146 30 150 86 Z M60 68 H118 Q114 50 88 50 Q64 50 60 68 Z" fill="#3db7f0" fill-rule="evenodd"/><path d="M8 148 Q-8 110 40 54 Q84 8 130 4 Q160 4 150 32" fill="none" stroke="#f2c23a" stroke-width="9"/></svg>
<svg class="b" style="left:353.90px;top:446.00px" width="15.4" height="14.6" viewBox="0 0 100 100"><rect width="100" height="100" fill="#fdfdfd" stroke="#c9d3e3" stroke-width="4"/><path d="M10 85 Q36 58 46 15 Q53 50 51 85 Z M40 85 Q60 58 67 24 Q75 54 73 85 Z M64 85 Q80 68 85 46 Q92 66 90 85 Z" fill="#1d5bb0"/></svg>
<svg class="b" style="left:383.00px;top:445.20px" width="16.8" height="16.2" viewBox="0 0 100 100"><rect width="100" height="100" fill="#15234f"/><path d="M10 85 Q36 58 46 15 Q53 50 51 85 Z M40 85 Q60 58 67 24 Q75 54 73 85 Z M64 85 Q80 68 85 46 Q92 66 90 85 Z" fill="#fff"/></svg>
<svg class="b" style="left:417.60px;top:446.60px" width="16" height="14.2" viewBox="0 0 160 142"><rect x="78" y="6" width="78" height="130" fill="#fff"/><path d="M94 30 H146 M94 52 H146 M94 74 H146 M94 96 H146 M94 116 H146" stroke="#8aa2c8" stroke-width="9"/><path d="M0 14 L104 0 V142 L0 128 Z" fill="#2b579a"/><path d="M22 46 L36 98 L52 56 L68 98 L82 46" fill="none" stroke="#fff" stroke-width="10"/></svg>
<svg class="b" style="left:448.40px;top:445.60px" width="16.6" height="15.6" viewBox="0 0 166 156"><path d="M8 92 Q8 40 76 34 Q146 32 152 80 Q152 112 116 108 Q94 106 98 126 Q100 148 66 146 Q10 140 8 92 Z" fill="#d9d5cc"/><circle cx="40" cy="84" r="13" fill="#3c8fd6"/><circle cx="70" cy="60" r="12" fill="#e3b93b"/><circle cx="108" cy="62" r="12" fill="#d75a3c"/><circle cx="48" cy="116" r="11" fill="#57a85a"/><path d="M96 120 L150 14 L162 20 L112 128 Z" fill="#e9a23b"/><path d="M146 8 L166 0 L162 22 Z" fill="#c96b2c"/></svg>
<svg class="b" style="left:707.80px;top:452.80px" width="4.2" height="2.5" viewBox="0 0 42 25"><path d="M0 25 L21 0 L42 25 Z" fill="#fff"/></svg>
<svg class="b" style="left:717.80px;top:450.50px" width="8.4" height="7" viewBox="0 0 84 70"><rect width="84" height="70" rx="6" fill="#1e73c8"/><ellipse cx="26" cy="35" rx="12" ry="15" fill="none" stroke="#fff" stroke-width="9"/><rect x="48" y="22" width="28" height="26" fill="#e8f0fb"/></svg>
<svg class="b" style="left:730.20px;top:450.20px" width="9" height="7.8" viewBox="0 0 90 78"><circle cx="36" cy="40" r="34" fill="#d8d8d8"/><circle cx="58" cy="46" r="26" fill="#f1f1f1"/><circle cx="58" cy="46" r="15" fill="#d64545"/><circle cx="58" cy="46" r="7" fill="#f3f3f3"/></svg>
<svg class="b" style="left:743.40px;top:450.20px" width="7.6" height="7.8" viewBox="0 0 76 78"><path d="M30 2 H72 V76 H30 Z" fill="#f4f4f4"/><path d="M44 2 V76 M58 2 V76" stroke="#552632" stroke-width="5"/><path d="M2 34 H26 M14 22 V48" stroke="#f4f4f4" stroke-width="9"/></svg>
<svg class="b" style="left:755.80px;top:450.40px" width="7.8" height="7.4" viewBox="0 0 78 74"><path d="M14 6 H74 V44 H14 Z" fill="none" stroke="#f1f1f1" stroke-width="8"/><path d="M4 22 V40 H22" fill="none" stroke="#f1f1f1" stroke-width="7"/><path d="M44 46 V62 M26 66 H62" stroke="#f1f1f1" stroke-width="8"/></svg>
<svg class="b" style="left:767.80px;top:450.60px" width="8.2" height="7" viewBox="0 0 82 70"><path d="M2 22 H20 L42 2 V68 L20 48 H2 Z" fill="#f4f4f4"/><path d="M54 18 Q66 35 54 52 M66 8 Q86 35 66 62" fill="none" stroke="#f4f4f4" stroke-width="7"/></svg>
<span class="t" style="top:447px;font-size:6.8px;color:#fff;left:793.20px;transform-origin:0 50%;transform:scaleX(0.8462);">06:32</span>
<span class="t" style="top:456px;font-size:6.8px;color:#fff;left:786.00px;transform-origin:0 50%;transform:scaleX(0.8394);">15-07-2015</span>
<svg class="b" style="left:502.80px;top:202.60px" width="8.8" height="8.4" viewBox="0 0 88 84"><circle cx="52" cy="38" r="30" fill="#f5f5f5" stroke="#6a6a6a" stroke-width="8"/><circle cx="52" cy="38" r="12" fill="none" stroke="#8a8a8a" stroke-width="6"/><path d="M6 22 Q2 50 30 72 Q50 84 70 76" fill="none" stroke="#5a5a5a" stroke-width="10"/></svg>
<svg class="b" style="left:575.00px;top:216.40px" width="8.6" height="8" viewBox="0 0 86 80"><path d="M4 6 H60 V40 H4 Z" fill="#fff" stroke="#6a6a6a" stroke-width="7"/><path d="M4 6 L32 28 L60 6" fill="none" stroke="#6a6a6a" stroke-width="6"/><path d="M50 30 V76 L62 64 H82 Z" fill="#fff" stroke="#4a4a4a" stroke-width="7"/></svg>
<svg class="b" style="left:575.90px;top:230.60px" width="6.2" height="6.2" viewBox="0 0 62 62"><circle cx="31" cy="31" r="28" fill="#dfeaf6" stroke="#6a9ccf" stroke-width="7"/><ellipse cx="31" cy="31" rx="12" ry="28" fill="none" stroke="#6a9ccf" stroke-width="5"/><path d="M3 31 H59" stroke="#6a9ccf" stroke-width="9"/></svg>
</div></body></html>
